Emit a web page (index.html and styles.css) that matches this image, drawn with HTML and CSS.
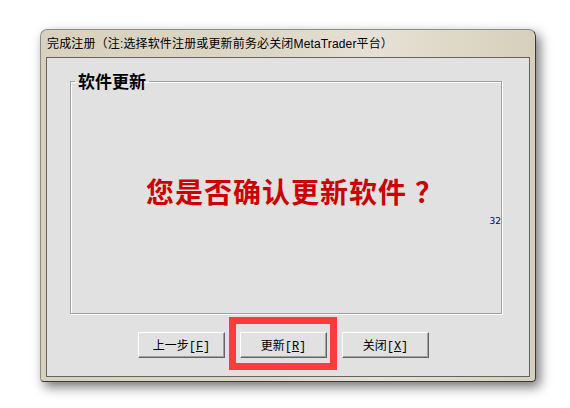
FILE: index.html
```html
<!DOCTYPE html>
<html lang="zh-CN">
<head>
    <meta charset="UTF-8">
    <title>完成注册</title>
    <link rel="stylesheet" href="styles.css">
</head>
<body>
    <div class="window">
        <div class="titlebar">完成注册（注:选择软件注册或更新前务必关闭MetaTrader平台）</div>
        <div class="client">
            <fieldset class="group">
                <legend>软件更新</legend>
                <div class="question">您是否确认更新软件<span class="qmark">？</span></div>
                <div class="counter">32</div>
            </fieldset>
            <div class="buttons">
                <button class="btn">上一步[<u>F</u>]</button>
                <span class="marked"><button class="btn">更新[<u>R</u>]</button></span>
                <button class="btn">关闭[<u>X</u>]</button>
            </div>
        </div>
    </div>
</body>
</html>
```

FILE: styles.css
```css
body {
    margin: 0;
    width: 570px;
    height: 408px;
    background-color: #fff;
    font-family: "Noto Sans CJK SC", "DejaVu Sans", sans-serif;
    overflow: hidden;
}

.window {
    box-sizing: border-box;
    width: 496px;
    height: 353px;
    margin: 29px 0 0 40px;
    border: 1px solid #3a3a3a;
    border-top-color: #8c8c8c;
    border-left-color: #8c8c8c;
    border-radius: 7px 7px 4px 4px;
    background: linear-gradient(90deg, #d8d1bd 0%, #dcd6c6 45%, #e6e1d5 68%, #d6cfba 100%);
    box-shadow: 4px 5px 12px rgba(0, 0, 0, 0.55);
    display: flex;
    flex-direction: column;
}

.titlebar {
    height: 27px;
    padding-left: 6px;
    font-family: "Liberation Sans", "Noto Sans CJK SC", sans-serif;
    font-size: 12px;
    letter-spacing: 0.15px;
    line-height: 29px;
    color: #000;
    white-space: nowrap;
}

.client {
    flex: 1;
    margin: 0 5px 4px 5px;
    border: 1px solid #646464;
    background-color: #e1e1e1;
    padding: 14px 27px 0 23px;
}

.group {
    box-sizing: border-box;
    width: 432px;
    height: 242px;
    margin: 0;
    padding: 0;
    border: 1px solid #a0a0a0;
    box-shadow: 1px 1px 0 #fff, inset 1px 1px 0 #fff;
}

.group legend {
    margin-left: 4px;
    padding: 0 3px;
    font-size: 17px;
    font-weight: bold;
    line-height: 18px;
    color: #000;
}

.question {
    margin-top: 86px;
    padding-left: 18px;
    text-align: center;
    font-size: 28px;
    font-weight: bold;
    letter-spacing: 1px;
    line-height: 30px;
    color: #cc0000;
}

.qmark {
    margin-left: 8px;
}

.counter {
    margin-top: 10px;
    text-align: right;
    font-family: "DejaVu Sans", sans-serif;
    font-size: 9px;
    line-height: 10px;
    color: #000080;
}

.buttons {
    display: flex;
    gap: 15px;
    margin-top: 18px;
    padding-left: 68px;
}

.btn {
    box-sizing: border-box;
    width: 87px;
    height: 26px;
    padding: 0;
    background-color: #e1e1e1;
    border: 1px solid;
    border-color: #fff #646464 #646464 #fff;
    box-shadow: inset -1px -1px 0 #a0a0a0;
    font-family: "Liberation Mono", "Noto Sans CJK SC", monospace;
    font-size: 12px;
    color: #000;
}

.marked {
    position: relative;
    display: flex;
}

.marked::after {
    content: "";
    position: absolute;
    top: -15px;
    left: -11px;
    right: -10px;
    bottom: -12px;
    border: 7px solid #ff3a3a;
    pointer-events: none;
}
```
